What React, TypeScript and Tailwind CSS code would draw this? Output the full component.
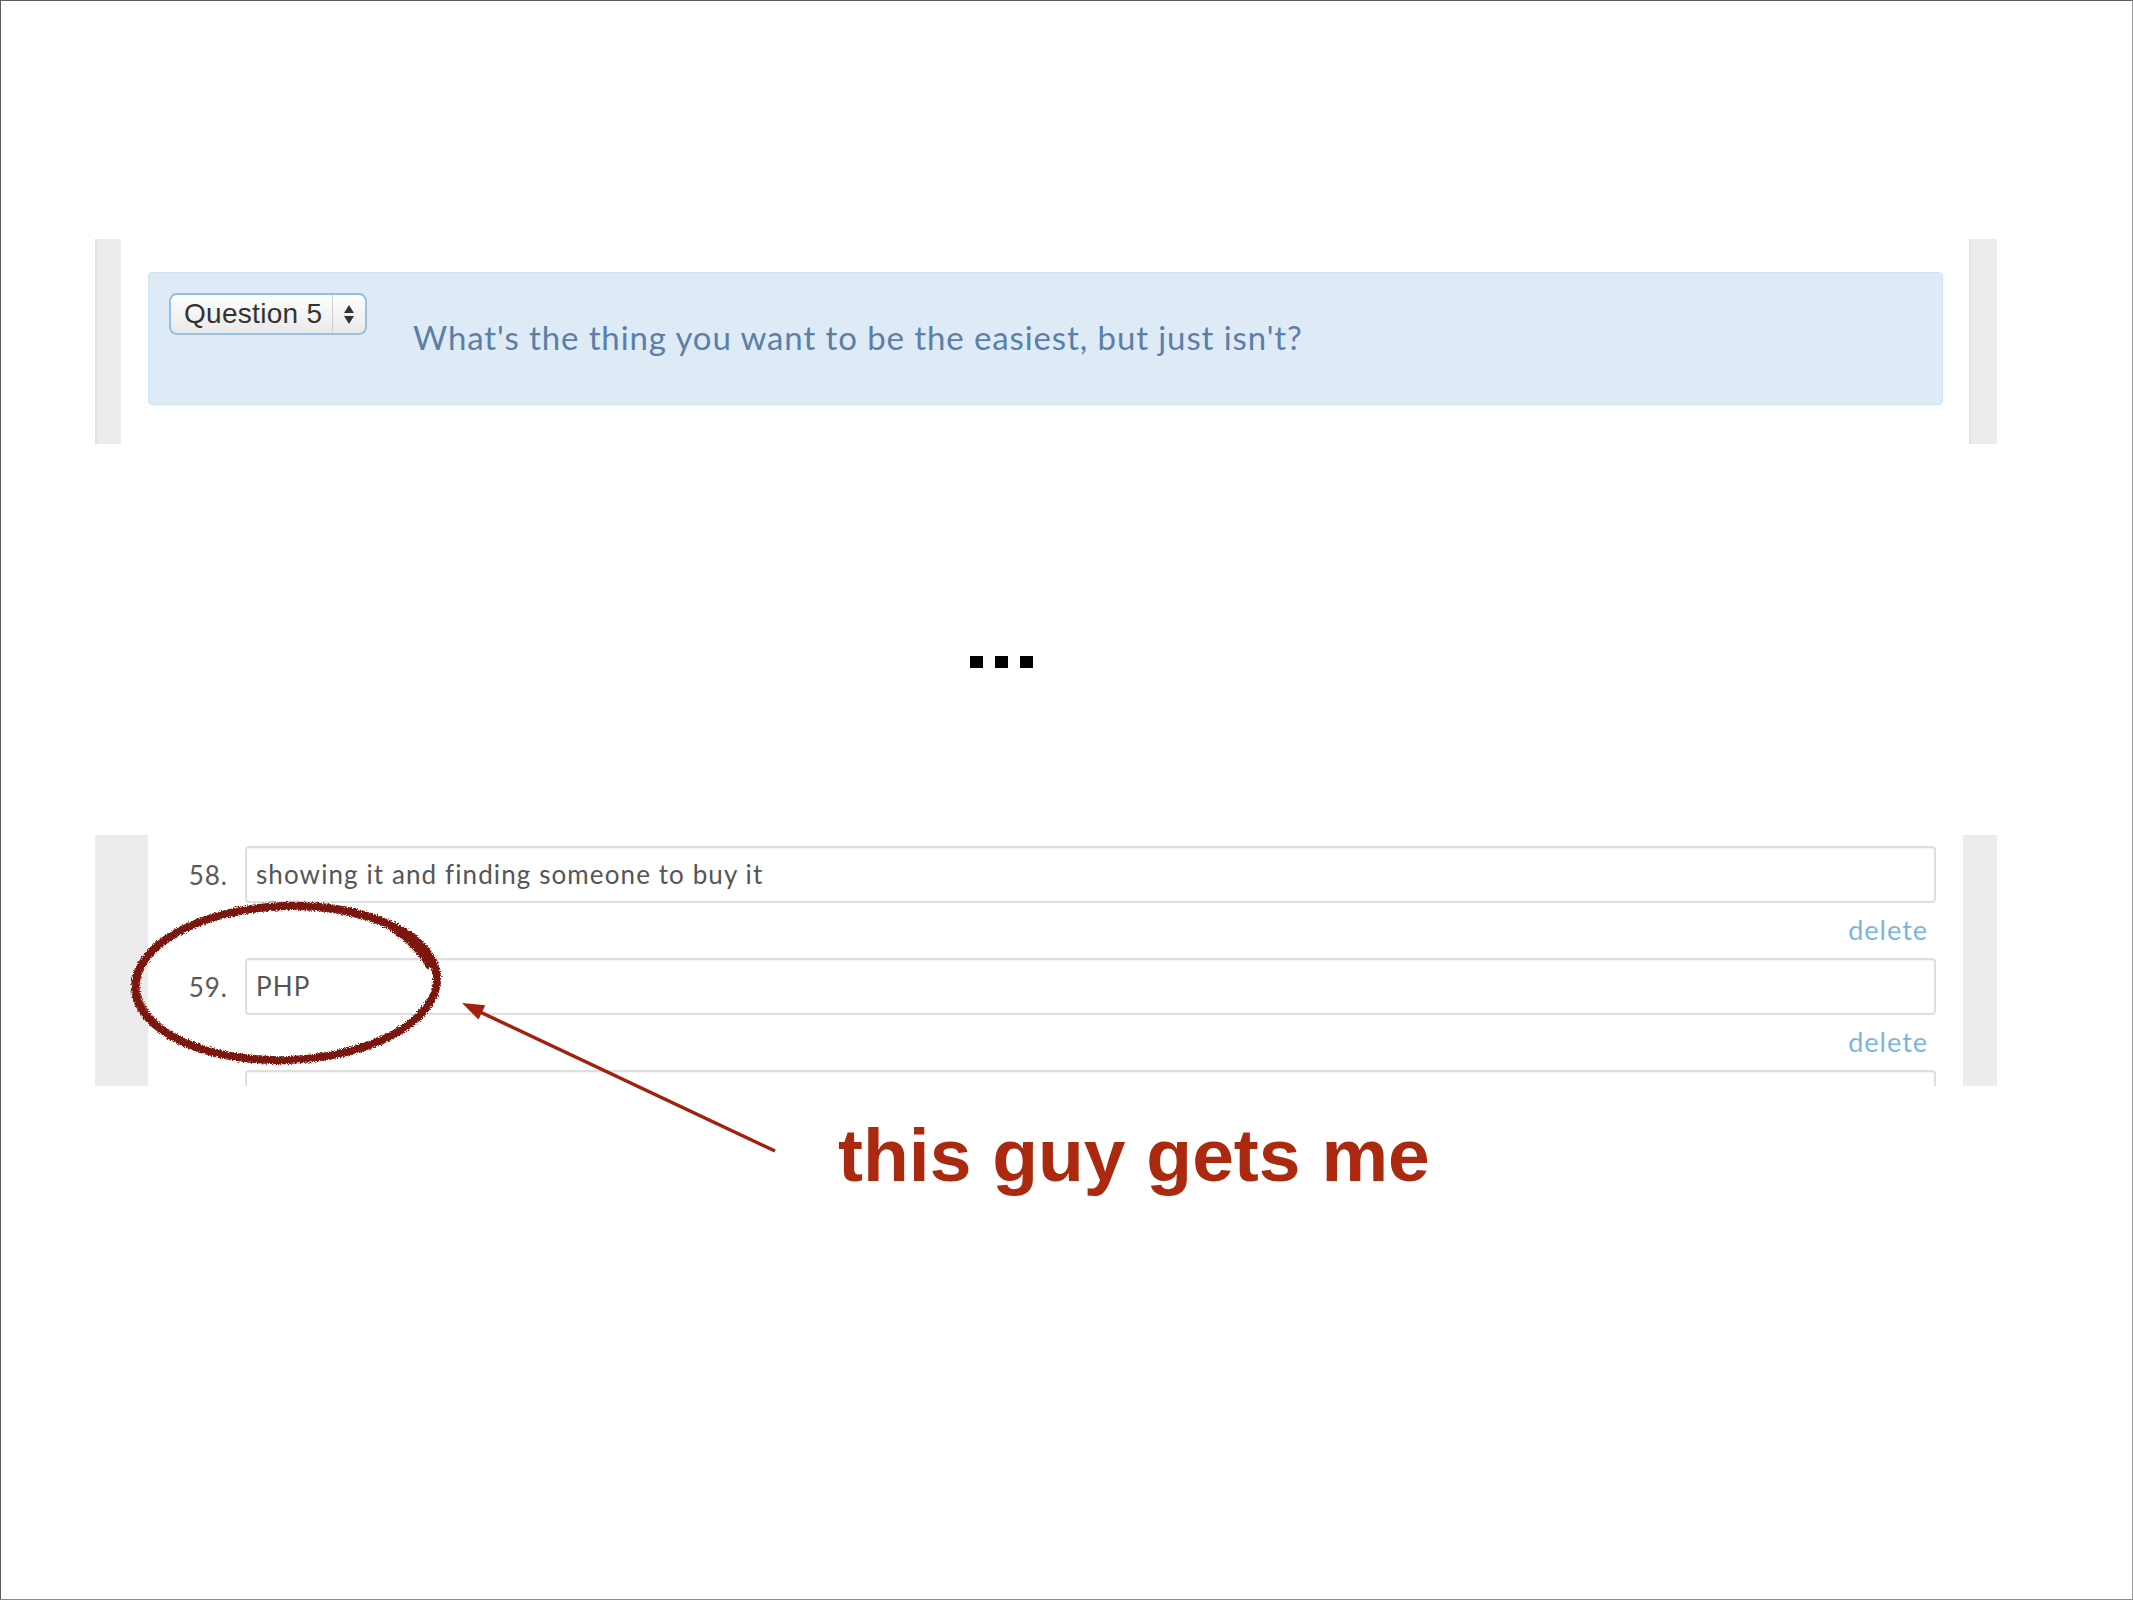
import React from "react";

const ui = { fontFamily: "Lato, 'Open Sans', sans-serif" };

function Row({ n, text, last }: { n: string; text: string; last?: boolean }) {
  return (
    <div>
      <div className="flex items-center">
        <div className="w-[80px] text-right text-[26px] leading-none tracking-[1px] text-[#5a5a5a]" style={ui}>
          {n}
        </div>
        <div
          className="ml-[17px] flex h-[57px] flex-1 items-center rounded-[4px] border-2 border-[#dedede] bg-white pl-[9px] text-[26px] tracking-[1.1px] text-[#555] shadow-[inset_0_1px_1px_rgba(0,0,0,0.04)]"
          style={ui}
        >
          {text}
        </div>
      </div>
      {!last && (
        <div className="h-[55px] pr-[8px] pt-[14px] text-right text-[27px] leading-[26px] tracking-[1px] text-[#7db5e0]" style={ui}>
          delete
        </div>
      )}
    </div>
  );
}

export default function App() {
  return (
    <div className="relative h-[1600px] w-[2133px] overflow-hidden border-b border-l border-r border-t border-b-[#8a8a8a] border-l-[#5c5c5c] border-r-[#9a9a9a] border-t-[#5c5c5c] bg-white">
      {/* Top panel */}
      <div className="mt-[238px] flex h-[205px]">
        <div className="ml-[94px] w-[26px] border-l-2 border-[#e2e2e2] bg-[#ececec]" />
        <div className="ml-[27px] w-[1795px] pt-[33px]">
          <div className="flex h-[133px] items-start rounded-[4px] border border-[#cfe5f0] bg-[#deebf6] pl-[20px] pt-[20px]">
            <div
              className="flex h-[42px] w-[198px] items-stretch rounded-[8px] border-2 border-[#93c1e4] bg-gradient-to-b from-white to-[#e9e9e9]"
            >
              <div
                className="flex flex-1 items-center pl-[13px] text-[28px] leading-none tracking-[0.3px] text-[#333]"
                style={{ fontFamily: "'Liberation Sans', Arial, sans-serif" }}
              >
                Question 5
              </div>
              <div className="flex w-[33px] flex-col items-center justify-center gap-[3px] border-l border-[#cfcfcf]">
                <svg width="10" height="8" viewBox="0 0 10 8">
                  <polygon points="5,0 10,8 0,8" fill="#333" />
                </svg>
                <svg width="10" height="8" viewBox="0 0 10 8">
                  <polygon points="0,0 10,0 5,8" fill="#333" />
                </svg>
              </div>
            </div>
            <div
              className="ml-[46px] mt-[24px] text-[33px] leading-[40px] tracking-[0.9px] text-[#5b7fa9]"
              style={ui}
            >
              What's the thing you want to be the easiest, but just isn't?
            </div>
          </div>
        </div>
        <div className="ml-[26px] w-[28px] border-l-2 border-[#e4e4e4] bg-[#ececec]" />
      </div>

      {/* Ellipsis */}
      <div className="ml-[969px] mt-[212px] flex gap-[12px]">
        <div className="h-[12px] w-[13px] bg-black" />
        <div className="h-[12px] w-[13px] bg-black" />
        <div className="h-[12px] w-[13px] bg-black" />
      </div>

      {/* Bottom panel */}
      <div className="mt-[167px] flex h-[251px] overflow-hidden">
        <div className="ml-[94px] w-[53px] bg-[#ececec]" />
        <div className="w-[1788px] pt-[11px]">
          <Row n="58." text="showing it and finding someone to buy it" />
          <Row n="59." text="PHP" />
          <Row n="" text="" last />
        </div>
        <div className="ml-[27px] w-[34px] bg-[#ececec]" />
      </div>

      {/* Caption */}
      <div
        className="ml-[837px] mt-[32px] text-[75px] font-bold leading-none text-[#ab290e]"
        style={{ fontFamily: "'Liberation Sans', Arial, sans-serif" }}
      >
        this guy gets me
      </div>

      {/* Annotations overlay */}
      <svg className="pointer-events-none absolute left-0 top-0" width="2133" height="1600" viewBox="1 1 2133 1600">
        <defs>
          <filter id="rough" x="-10%" y="-10%" width="120%" height="120%">
            <feTurbulence type="fractalNoise" baseFrequency="0.8" numOctaves="2" result="n" />
            <feDisplacementMap in="SourceGraphic" in2="n" scale="5" xChannelSelector="R" yChannelSelector="G" />
          </filter>
        </defs>
        <g filter="url(#rough)" fill="none" stroke="#7b190c">
          <ellipse cx="286" cy="983" rx="151" ry="77" strokeWidth="8" transform="rotate(-2 286 983)" />
          <path d="M 392 928 Q 420 948 430 968" strokeWidth="6" />
          <ellipse cx="287" cy="984" rx="149" ry="76" strokeWidth="4" transform="rotate(-1 286 983)" opacity="0.7" />
        </g>
        <line x1="775" y1="1151" x2="478" y2="1011" stroke="#a3200c" strokeWidth="3.5" />
        <polygon points="462,1003 485.3,1005.2 478.5,1019.6" fill="#a3200c" />
      </svg>
    </div>
  );
}
